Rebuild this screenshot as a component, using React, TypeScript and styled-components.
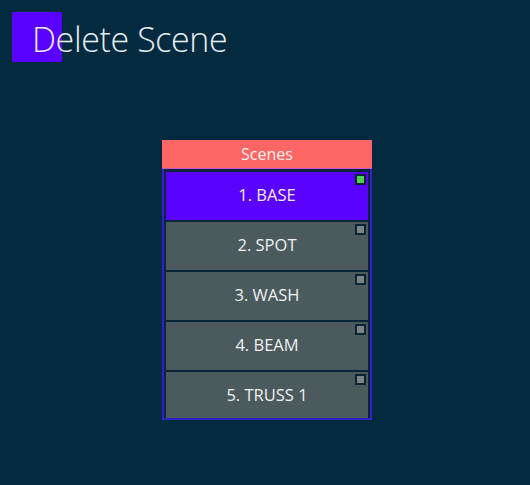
import React from "react";
import styled, { createGlobalStyle } from "styled-components";

const GlobalStyle = createGlobalStyle`
  html, body {
    margin: 0;
    padding: 0;
    background: #032a3f;
  }
  body {
    width: 530px;
    height: 485px;
    overflow: hidden;
    font-family: "Open Sans", "Noto Sans", sans-serif;
  }
`;

const Page = styled.div`
  display: flex;
  flex-direction: column;
  padding: 12px 0 0 12px;
`;

const TitleBar = styled.div`
  display: flex;
  align-items: center;
  height: 50px;
`;

const Accent = styled.div`
  width: 50px;
  height: 50px;
  background: #5a00ff;
  flex-shrink: 0;
`;

const Title = styled.h1`
  margin: 0 0 0 -30px;
  font-family: "Open Sans", sans-serif;
  font-weight: 300;
  font-size: 34px;
  letter-spacing: -0.4px;
  color: #e4eef4;
  line-height: 50px;
  position: relative;
  top: 2px;
`;

const Panel = styled.div`
  margin: 78px 0 0 150px;
  width: 210px;
  display: flex;
  flex-direction: column;
`;

const PanelHeader = styled.div`
  height: 28px;
  background: #fe6666;
  color: #fdf0ee;
  font-size: 16px;
  display: flex;
  align-items: center;
  justify-content: center;
  border-bottom: 1px solid #c455d8;
`;

const List = styled.div`
  height: 244px;
  overflow: hidden;
  border: 2px solid #3120d0;
  border-top: none;
  background: #0b2538;
  padding: 3px 2px 2px 2px;
  display: flex;
  flex-direction: column;
  gap: 2px;
`;

const Row = styled.div<{ $active?: boolean }>`
  position: relative;
  flex-shrink: 0;
  height: 48px;
  padding-bottom: 3px;
  box-sizing: border-box;
  background: ${(p) => (p.$active ? "#5a00ff" : "#4a5a5d")};
  color: #f0f0f0;
  font-size: 16.5px;
  display: flex;
  align-items: center;
  justify-content: center;
`;

const Check = styled.span<{ $on?: boolean }>`
  position: absolute;
  top: 2px;
  right: 2px;
  width: 7px;
  height: 7px;
  border: 2px solid #0c2535;
  background: ${(p) => (p.$on ? "#4fd04f" : "#7c8486")};
`;

const scenes = ["1. BASE", "2. SPOT", "3. WASH", "4. BEAM", "5. TRUSS 1"];

export default function App() {
  return (
    <>
      <GlobalStyle />
      <Page>
        <TitleBar>
          <Accent />
          <Title>Delete Scene</Title>
        </TitleBar>
        <Panel>
          <PanelHeader>Scenes</PanelHeader>
          <List>
            {scenes.map((s, i) => (
              <Row key={s} $active={i === 0}>
                {s}
                <Check $on={i === 0} />
              </Row>
            ))}
          </List>
        </Panel>
      </Page>
    </>
  );
}
